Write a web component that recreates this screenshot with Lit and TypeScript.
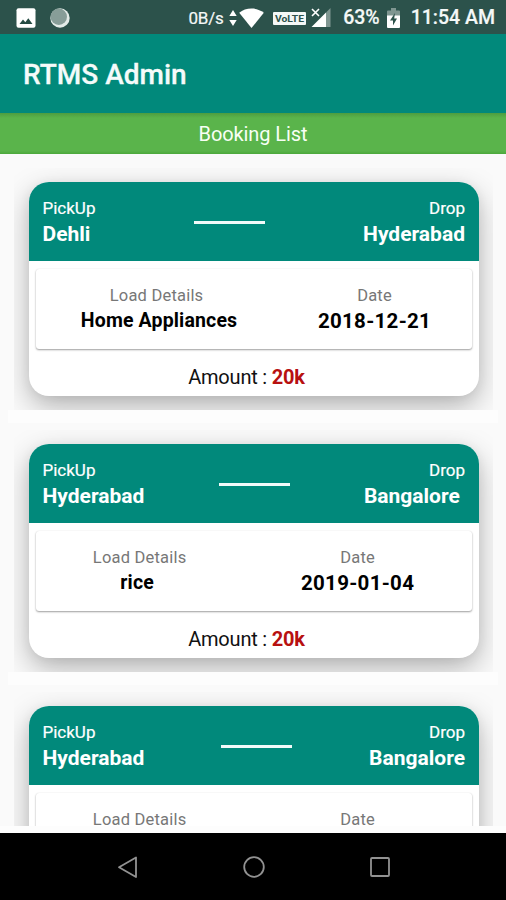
import { LitElement, html, css, svg } from "lit";
import { customElement, property } from "lit/decorators.js";

interface Booking {
  pickup: string;
  drop: string;
  load: string;
  date: string;
  amount: string;
}

const BOOKINGS: Booking[] = [
  { pickup: "Dehli", drop: "Hyderabad", load: " Home Appliances", date: "2018-12-21", amount: "20k" },
  { pickup: "Hyderabad", drop: "Bangalore ", load: "rice ", date: "2019-01-04", amount: "20k" },
  { pickup: "Hyderabad", drop: "Bangalore", load: "rice ", date: "2019-01-04", amount: "20k" },
];

@customElement("status-bar")
class StatusBar extends LitElement {
  static styles = css`
    :host {
      display: flex;
      align-items: center;
      height: 34px;
      box-sizing: border-box;
      padding: 2px 11px 0 16px;
      background: #2c524b;
      color: #f4f8f7;
      line-height: 1;
    }
    svg { display: block; flex: none; }
    .picture { margin-right: 14px; }
    .rate { margin-left: auto; font-size: 17px; letter-spacing: -0.2px; -webkit-text-stroke: 0.2px; }
    .arrows { margin-left: 5.500px; }
    .wifi { margin-left: 2px; }
    .volte { margin-left: 9px; }
    .signal { margin-left: 5px; }
    .percent { margin-left: 12px; font-size: 19.5px; font-weight: 500; -webkit-text-stroke: 0.2px; }
    .battery { margin: 0 11px 0 7px; }
    .time { font-size: 19.5px; font-weight: 500; -webkit-text-stroke: 0.2px; }
    .tag { font: 700 8.5px Roboto, sans-serif; }
  `;
  render() {
    return html`
      <svg class="picture" width="20" height="20" viewBox="0 0 20 20">
        <rect x=".5" y=".3" width="19" height="19.4" rx="2" fill="#fff" />
        <path d="M3.5 16 7 11.5l2.3 2.7 3-4L16.500 16z" fill="#244b43" />
      </svg>
      <svg width="20" height="20" viewBox="0 0 20 20">
        <circle cx="10" cy="10" r="9.700" fill="#e3ebe8" />
        <circle cx="8.800" cy="8.800" r="8.200" fill="#879d98" />
      </svg>
      <span class="rate">0B/s</span>
      <svg class="arrows" width="8" height="18" viewBox="0 0 8 18">
        <path d="M4 1l3.700 6H.3zM4 17l3.700-6H.3z" fill="#fff" />
      </svg>
      <svg class="wifi" width="25" height="20" viewBox="0 0 25 20">
        <path d="M12.500 20 .2 4.800C3.500 2 7.800.5 12.500.5s9 1.500 12.300 4.300z" fill="#fff" />
      </svg>
      <svg class="volte" width="33" height="13" viewBox="0 0 33 13">
        <rect width="33" height="13" rx="1" fill="#f4f8f7" />
        <text class="tag" x="2" y="9.600" textLength="29" lengthAdjust="spacingAndGlyphs" fill="#2c524b">VoLTE</text>
      </svg>
      <svg class="signal" width="20" height="20" viewBox="0 0 20 20">
        <path d="M19.500 0v19H15V4.500z" fill="#7f9691" />
        <path d="M15 4.500V19H.5z" fill="#fff" />
        <path d="M1 1l7 7M8 1L1 8" stroke="#fff" stroke-width="1.600" />
      </svg>
      <span class="percent">63%</span>
      <svg class="battery" width="13" height="20" viewBox="0 0 13 20">
        <path d="M4 0h5v2.500h3a1 1 0 0 1 1 1V8H0V3.500a1 1 0 0 1 1-1h3z" fill="#7f9691" />
        <path d="M0 7.500h13V19a1 1 0 0 1-1 1H1a1 1 0 0 1-1-1z" fill="#fff" />
        <path d="M8 5 3 12.500h3V17.500l4-7H7.200z" fill="#2c524b" />
      </svg>
      <span class="time">11:54 AM</span>
    `;
  }
}

@customElement("booking-card")
class BookingCard extends LitElement {
  @property({ attribute: false }) booking!: Booking;

  static styles = css`
    :host {
      display: block;
      flex: none;
      height: 262px;
    }
    .frame {
      height: 242px;
      box-sizing: border-box;
      margin: 0 13px 0 14px;
      padding: 14px 14.500px 14px;
      overflow: hidden;
    }
    .gap { height: 13px; margin: 0 8px; background: #fdfdfd; }
    .card {
      height: 214px;
      border-radius: 20px;
      background: #fff;
      box-shadow: 0 11px 30px rgba(0, 0, 0, 0.28), 0 2px 12px rgba(0, 0, 0, 0.06);
    }
    .route {
      display: flex;
      justify-content: space-between;
      height: 79px;
      box-sizing: border-box;
      padding: 15px 13.500px 0 14px;
      border-radius: 20px 20px 0 0;
      background: #01897b;
      color: #fff;
    }
    .label { font-size: 17px; line-height: 22px; -webkit-text-stroke: 0.2px; }
    .city { font-size: 21px; font-weight: 700; line-height: 30px; white-space: pre; }
    .end { text-align: right; }
    .line { width: 71px; height: 3px; margin-top: 23.500px; background: #f2faf9; }
    .details {
      display: flex;
      justify-content: space-around;
      height: 80px;
      box-sizing: border-box;
      margin: 7.500px 7px 0;
      padding-top: 16px;
      border-radius: 3px;
      background: #fff;
      box-shadow: 0 1px 2px rgba(0, 0, 0, 0.38), 0 0 1px rgba(0, 0, 0, 0.1);
      text-align: center;
      color: #000;
    }
    .caption { font-size: 16.500px; line-height: 22px; letter-spacing: 0.2px; color: #777; }
    .value { font-size: 19.500px; font-weight: 700; line-height: 28px; white-space: pre; letter-spacing: 0.15px; }
    .date { font-size: 20.500px; letter-spacing: 0.3px; }
    .amount {
      margin: 15px 14px 0 0;
      font-size: 20px;
      line-height: 26px;
      letter-spacing: -0.2px;
      text-align: center;
      color: #111;
    }
    .sum { font-weight: 700; color: #b71010; }
  `;
  render() {
    const b = this.booking;
    return html`
      <div class="frame">
        <div class="card">
          <div class="route">
            <div><div class="label">PickUp</div><div class="city">${b.pickup}</div></div>
            <div class="line"></div>
            <div class="end"><div class="label">Drop</div><div class="city">${b.drop}</div></div>
          </div>
          <div class="details">
            <div><div class="caption">Load Details</div><div class="value">${b.load}</div></div>
            <div><div class="caption">Date</div><div class="value date">${b.date}</div></div>
          </div>
          <div class="amount">Amount : <span class="sum">${b.amount}</span></div>
        </div>
      </div>
      <div class="gap"></div>
    `;
  }
}

@customElement("app-root")
class AppRoot extends LitElement {
  static styles = css`
    :host {
      display: flex;
      flex-direction: column;
      width: 506px;
      height: 900px;
      overflow: hidden;
      background: #fafafa;
      font-family: Roboto, "Liberation Sans", sans-serif;
    }
    status-bar { flex: none; }
    .bar {
      flex: none;
      height: 79px;
      padding-left: 23px;
      background: #01897b;
      color: #f5fbfa;
      font-size: 28px;
      font-weight: 500;
      line-height: 82px;
      -webkit-text-stroke: 0.3px;
    }
    .title {
      flex: none;
      height: 40.500px;
      background: linear-gradient(#4d9d40, #5ab44b 5px, #5ab44b 38px, #4ba83b);
      color: #f8fff5;
      font-size: 20px;
      letter-spacing: -0.1px;
      line-height: 42px;
      text-align: center;
    }
    .list {
      display: flex;
      flex-direction: column;
      flex: 1;
      min-height: 0;
      padding-top: 14.500px;
      overflow: hidden;
    }
    .edge { flex: none; height: 7px; background: #fdfdfd; }
    .nav {
      display: flex;
      flex: none;
      align-items: center;
      justify-content: space-between;
      height: 67px;
      box-sizing: border-box;
      padding: 0 115px 0 116px;
      background: #000;
    }
  `;
  render() {
    const icon = (shape: unknown) => html`
      <svg width="22" height="24" viewBox="0 0 22 24" fill="none" stroke="#929292" stroke-width="1.800">${shape}</svg>
    `;
    return html`
      <status-bar></status-bar>
      <div class="bar">RTMS Admin</div>
      <div class="title">Booking List</div>
      <div class="list">${BOOKINGS.map((b) => html`<booking-card .booking=${b}></booking-card>`)}</div>
      <div class="edge"></div>
      <div class="nav">
        ${icon(svg`<path d="M20 2.500v19.500L3 12.200z" stroke-linejoin="round" />`)}
        ${icon(svg`<circle cx="11" cy="12" r="9.800" />`)}
        ${icon(svg`<rect x="2" y="3" width="18" height="18" rx="1" />`)}
      </div>
    `;
  }
}
